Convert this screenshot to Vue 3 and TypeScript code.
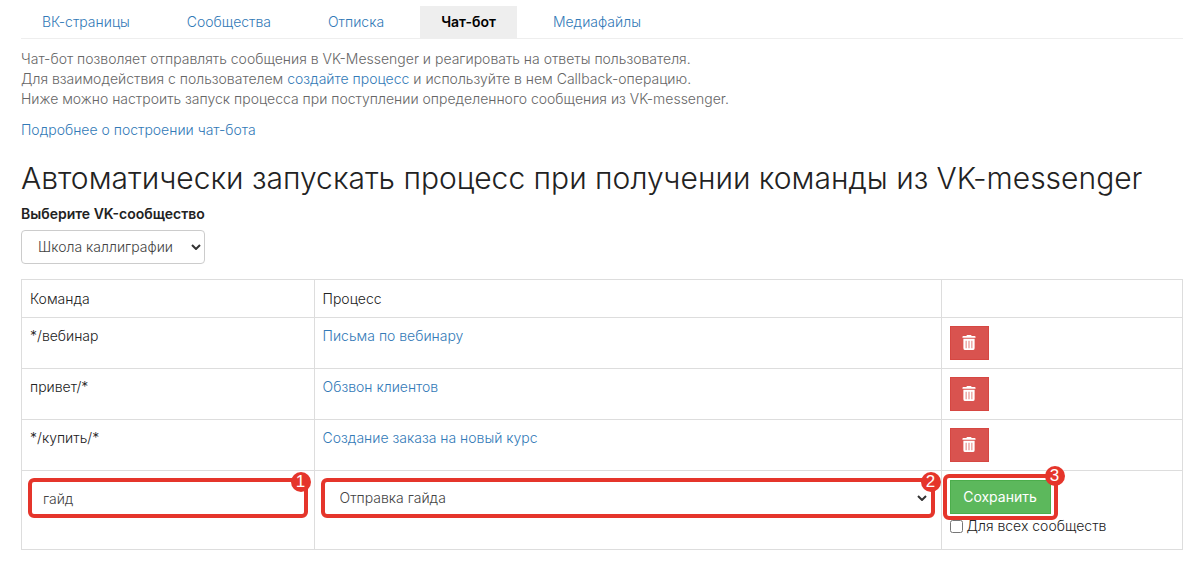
<script setup lang="ts">
import { ref } from 'vue'

interface Tab {
  label: string
  active?: boolean
}

interface Rule {
  command: string
  process: string
}

const tabs: Tab[] = [
  { label: 'ВК-страницы' },
  { label: 'Сообщества' },
  { label: 'Отписка' },
  { label: 'Чат-бот', active: true },
  { label: 'Медиафайлы' },
]

const rules = ref<Rule[]>([
  { command: '*/вебинар', process: 'Письма по вебинару' },
  { command: 'привет/*', process: 'Обзвон клиентов' },
  { command: '*/купить/*', process: 'Создание заказа на новый курс' },
])

const community = ref('Школа каллиграфии')
const command = ref('гайд')
const process = ref('Отправка гайда')
const forAll = ref(false)

function removeRule(index: number) {
  rules.value.splice(index, 1)
}
</script>

<template>
  <main class="page">
    <nav class="tabs">
      <a
        v-for="tab in tabs"
        :key="tab.label"
        href="#"
        class="tab"
        :class="{ active: tab.active }"
      >{{ tab.label }}</a>
    </nav>

    <p class="intro">
      Чат-бот позволяет отправлять сообщения в VK-Messenger и реагировать на ответы пользователя.<br>
      Для взаимодействия с пользователем <a href="#">создайте процесс</a> и используйте в нем Callback-операцию.<br>
      Ниже можно настроить запуск процесса при поступлении определенного сообщения из VK-messenger.
    </p>
    <p class="more"><a href="#">Подробнее о построении чат-бота</a></p>

    <h1>Автоматически запускать процесс при получении команды из VK-messenger</h1>

    <label class="field-label" for="community">Выберите VK-сообщество</label>
    <div class="select community">
      <select id="community" v-model="community">
        <option>Школа каллиграфии</option>
      </select>
      <svg class="chevron" viewBox="0 0 10 6" aria-hidden="true"><path d="M1 1l4 4 4-4" /></svg>
    </div>

    <table>
      <colgroup>
        <col class="col-command">
        <col class="col-process">
        <col>
      </colgroup>
      <thead>
        <tr>
          <th scope="col">Команда</th>
          <th scope="col">Процесс</th>
          <th></th>
        </tr>
      </thead>
      <tbody>
        <tr v-for="(rule, index) in rules" :key="rule.command">
          <td>{{ rule.command }}</td>
          <td><a href="#">{{ rule.process }}</a></td>
          <td>
            <button type="button" class="delete" aria-label="Удалить" @click="removeRule(index)">
              <svg viewBox="0 0 14 16" aria-hidden="true">
                <path
                  fill-rule="evenodd"
                  d="M5 0h4l1 1h3q1 0 1 1v1H0V2q0-1 1-1h3zM1 4h12v10q0 2-2 2H3q-2 0-2-2zM3.500 6v8h.8V6zM6.600 6v8h.8V6zM9.700 6v8h.8V6z"
                />
              </svg>
            </button>
          </td>
        </tr>
        <tr class="new-rule">
          <td>
            <div class="marked">
              <input v-model="command" class="command-input" type="text" aria-label="Команда">
              <span class="badge">1</span>
            </div>
          </td>
          <td>
            <div class="marked select">
              <select v-model="process" aria-label="Процесс">
                <option>Отправка гайда</option>
              </select>
              <svg class="chevron" viewBox="0 0 10 6" aria-hidden="true"><path d="M1 1l4 4 4-4" /></svg>
              <span class="badge">2</span>
            </div>
          </td>
          <td>
            <div class="marked save-wrap">
              <button type="button" class="save">Сохранить</button>
              <span class="badge">3</span>
            </div>
            <label class="check"><input v-model="forAll" type="checkbox">Для всех сообществ</label>
          </td>
        </tr>
      </tbody>
    </table>
  </main>
</template>

<style>
body {
  margin: 0;
  background: #fff;
}
</style>

<style scoped>
.page {
  box-sizing: border-box;
  padding: 6px 17px 14px 21px;
  font-family: Inter, "Open Sans", sans-serif;
  font-size: 14px;
  font-weight: 300;
  line-height: 20px;
  color: #222;
}

a {
  color: #337ab7;
  text-decoration: none;
}

.tabs {
  display: flex;
  gap: 15px;
  border-bottom: 1px solid #eee;
}

.tab {
  padding: 6px 21px;
}

.tab.active {
  background: #eee;
  color: #000;
  font-weight: 600;
}

p {
  margin: 0;
}

.intro {
  margin-top: 10px;
  color: #666;
}

.more {
  margin-top: 11px;
}

h1 {
  margin: 20px 0 8px;
  font-size: 30px;
  line-height: 36px;
  font-weight: 300;
  color: #222;
}

.field-label {
  display: block;
  margin-bottom: 6px;
  font-weight: 600;
}

.select {
  position: relative;
}

select,
input,
button {
  font: inherit;
}

select {
  appearance: none;
  box-sizing: border-box;
  display: block;
  width: 100%;
  height: 34px;
  padding: 0 28px 0 16px;
  border: 1px solid #ccc;
  border-radius: 4px;
  background: #fff;
  color: #444;
}

.chevron {
  position: absolute;
  right: 4px;
  top: 50%;
  width: 10px;
  height: 6px;
  margin-top: -3px;
  fill: none;
  stroke: #333;
  stroke-width: 2;
  pointer-events: none;
}

.community {
  width: 184px;
  margin-bottom: 15px;
}

table {
  width: 100%;
  table-layout: fixed;
  border-collapse: collapse;
}

.col-command {
  width: 25.2%;
}

.col-process {
  width: 54%;
}

th,
td {
  padding: 8px;
  border: 1px solid #ddd;
  vertical-align: top;
  text-align: left;
  font-weight: 300;
}

th {
  padding-top: 9px;
}

.delete {
  display: flex;
  align-items: center;
  justify-content: center;
  width: 39px;
  height: 34px;
  border: 1px solid #d64742;
  background: #d9534f;
  padding: 0 0 2px;
}

.delete svg {
  width: 14px;
  height: 15px;
  fill: #fff;
}

.marked {
  position: relative;
}

.marked::before {
  content: "";
  position: absolute;
  inset: -2px;
  z-index: 1;
  border: 4px solid #e5352b;
  border-radius: 6px;
  pointer-events: none;
}

.badge {
  position: absolute;
  top: -8px;
  right: -5px;
  z-index: 2;
  width: 20px;
  height: 20px;
  border-radius: 50%;
  background: #e5352b;
  color: #fff;
  font-family: "Liberation Sans", sans-serif;
  font-size: 17px;
  font-weight: 400;
  line-height: 20px;
  text-align: center;
}

.select .badge {
  right: -8px;
}

.new-rule td {
  height: 61px;
  padding-top: 9px;
}

.command-input {
  box-sizing: border-box;
  display: block;
  width: 100%;
  height: 36px;
  padding: 0 12px;
  border: 1px solid #ccc;
  background: #fff;
  color: #444;
}

.new-rule select {
  height: 36px;
}

.new-rule .chevron {
  right: 6px;
}

.save-wrap {
  width: 101px;
}

.save-wrap::before {
  inset: -6px -7px;
}

.save-wrap .badge {
  top: -14px;
  right: -14px;
}

.save {
  display: block;
  width: 100%;
  height: 34px;
  padding: 0;
  border: 1px solid #4cae4c;
  background: #5cb85c;
  color: #fff;
  font-weight: 400;
}

.check {
  display: flex;
  align-items: center;
  gap: 4px;
  margin-top: 2px;
}

.check input {
  width: 13px;
  height: 13px;
  margin: 0;
}
</style>
